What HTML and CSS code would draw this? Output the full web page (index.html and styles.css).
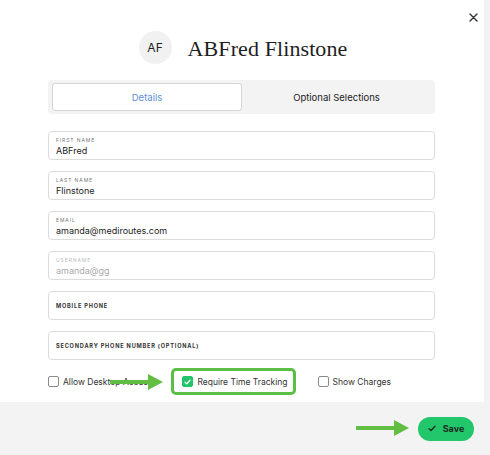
FILE: index.html
```html
<!DOCTYPE html>
<html>
<head>
<meta charset="utf-8">
<link rel="stylesheet" href="styles.css">
</head>
<body>
<div class="modal">
  <button class="close" aria-label="Close">
    <svg width="9" height="9" viewBox="0 0 9 9"><path d="M1 1L8 8M8 1L1 8" stroke="#333" stroke-width="1.4" stroke-linecap="round"/></svg>
  </button>
  <div class="header">
    <div class="avatar">AF</div>
    <h1 class="title">ABFred Flinstone</h1>
  </div>
  <div class="content">
    <div class="tabs">
      <div class="tab active">Details</div>
      <div class="tab">Optional Selections</div>
    </div>
    <div class="fields">
      <div class="field"><div class="label">First Name</div><div class="value">ABFred</div></div>
      <div class="field"><div class="label">Last Name</div><div class="value">Flinstone</div></div>
      <div class="field"><div class="label">Email</div><div class="value">amanda@mediroutes.com</div></div>
      <div class="field disabled"><div class="label">Username</div><div class="value">amanda@gg</div></div>
      <div class="field empty"><div class="label">Mobile Phone</div></div>
      <div class="field empty"><div class="label">Secondary Phone Number (Optional)</div></div>
    </div>
    <div class="checks">
      <label class="check"><span class="box"></span><span>Allow Desktop Access</span></label>
      <label class="check highlight"><span class="box checked"><svg width="7" height="6" viewBox="0 0 7 6"><path d="M1 3.2L2.7 4.8L6 1.2" fill="none" stroke="#fff" stroke-width="1.3" stroke-linecap="round" stroke-linejoin="round"/></svg></span><span>Require Time Tracking</span></label>
      <label class="check last"><span class="box"></span><span>Show Charges</span></label>
      <svg class="arrow arrow-1" width="54" height="18" viewBox="0 0 54 18"><path d="M0 7H38V1L53 9L38 17V11H0Z" fill="#62bd43"/></svg>
    </div>
  </div>
</div>
<div class="footer">
  <svg class="arrow arrow-2" width="54" height="18" viewBox="0 0 54 18"><path d="M0 7H38V1L53 9L38 17V11H0Z" fill="#62bd43"/></svg>
  <button class="save">
    <svg width="8" height="7" viewBox="0 0 8 7"><path d="M1 3.6L3 5.5L7 1.2" fill="none" stroke="#1d2b22" stroke-width="1.3" stroke-linecap="round" stroke-linejoin="round"/></svg>
    <span>Save</span>
  </button>
</div>
</body>
</html>
```
FILE: styles.css
```css
* { box-sizing: border-box; }
html, body { margin: 0; padding: 0; }
body {
  width: 490px;
  height: 455px;
  background: #f3f3f3;
  font-family: Inter, "Liberation Sans", Arial, sans-serif;
  color: #222;
  overflow: hidden;
}
.modal {
  position: relative;
  width: 484px;
  height: 402px;
  background: #fff;
  padding-top: 31px;
}
.close {
  position: absolute;
  top: 10px;
  right: 4px;
  width: 14px;
  height: 14px;
  padding: 0;
  border: 0;
  background: transparent;
  display: flex;
  align-items: center;
  justify-content: center;
}
.header {
  display: flex;
  align-items: center;
  justify-content: center;
  gap: 16px;
  height: 33px;
  padding-left: 2px;
}
.avatar {
  width: 33px;
  height: 33px;
  border-radius: 50%;
  background: #f1f1f1;
  display: flex;
  align-items: center;
  justify-content: center;
  font-size: 12px;
  color: #222;
  letter-spacing: 0.2px;
}
.title {
  margin: 2px 0 0 0;
  font-family: "Liberation Serif", "Times New Roman", serif;
  font-weight: 400;
  font-size: 22px;
  color: #1e1e1e;
  letter-spacing: 0.1px;
}
.content {
  padding: 16px 0 0 48px;
  width: 435px;
}
.tabs {
  display: flex;
  height: 34px;
  background: #f3f3f3;
  border-radius: 4px;
  padding: 3px 4px;
}
.tab {
  flex: 1;
  display: flex;
  align-items: center;
  justify-content: center;
  font-size: 9.5px;
  color: #222;
}
.tab.active {
  flex: 0 0 190px;
  background: #fff;
  border: 1px solid #d6d6d6;
  border-radius: 3px;
  color: #5e8fd6;
}
.fields {
  margin-top: 17px;
  display: flex;
  flex-direction: column;
  gap: 11px;
}
.field {
  height: 29px;
  border: 1px solid #dcdcdc;
  border-radius: 4px;
  padding: 5px 0 0 7px;
}
.label {
  font-size: 5px;
  line-height: 7px;
  text-transform: uppercase;
  letter-spacing: 0.9px;
  color: #777;
}
.value {
  font-size: 9px;
  line-height: 13px;
  color: #1d1d1d;
}
.field.disabled .label { color: #bbb; }
.field.disabled .value { color: #aaa; }
.field.empty {
  display: flex;
  align-items: center;
  padding-top: 2px;
}
.field.empty .label {
  font-size: 5.6px;
  font-weight: 700;
  color: #333;
  letter-spacing: 0.8px;
}
.checks {
  position: relative;
  margin-top: 8px;
  height: 27px;
  display: flex;
  align-items: center;
}
.check {
  display: flex;
  align-items: center;
  gap: 4px;
  font-size: 8.5px;
  color: #333;
}
.box {
  width: 11px;
  height: 11px;
  border: 1px solid #8a8a8a;
  border-radius: 2px;
  background: #fff;
  display: flex;
  align-items: center;
  justify-content: center;
}
.box.checked {
  border-color: #22c56a;
  background: #22c56a;
}
.highlight {
  margin-left: 19px;
  height: 27px;
  border: 3px solid #5cbf45;
  border-radius: 5px;
  padding: 0 5px 0 8px;
}
.last { margin-left: 22px; }
.arrow { position: absolute; }
.arrow-1 { left: 62px; top: 5px; }
.footer {
  position: relative;
  height: 53px;
  display: flex;
  align-items: center;
  justify-content: flex-end;
  padding-right: 16px;
}
.arrow-2 { left: 356px; top: 17px; }
.save {
  width: 56px;
  height: 24px;
  border: 0;
  border-radius: 12px;
  background: #22c66b;
  display: flex;
  align-items: center;
  justify-content: center;
  gap: 7px;
  font-family: Inter, "Liberation Sans", Arial, sans-serif;
  font-size: 9px;
  font-weight: 700;
  color: #1d2b22;
  padding: 0;
}
```
